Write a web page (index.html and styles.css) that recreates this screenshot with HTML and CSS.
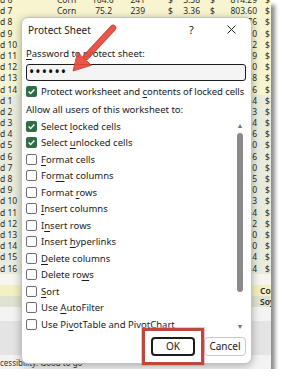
FILE: index.html
```html
<!DOCTYPE html>
<html lang="en">
<head>
    <meta charset="UTF-8">
    <title>Protect Sheet</title>
    <link rel="stylesheet" href="styles.css">
</head>
<body>
    <div class="screen">
        <div class="rows">
            <div class="row"><span>d 6</span><span>Corn</span><span class="num">164.6</span><span class="num">241</span><span class="acct e"><i>$</i>3.38</span><span class="acct f"><i>$</i>814.29</span><span class="acct g"><i>$</i></span></div>
            <div class="row"><span>d 7</span><span>Corn</span><span class="num">75.2</span><span class="num">239</span><span class="acct e"><i>$</i>3.36</span><span class="acct f"><i>$</i>803.60</span><span class="acct g"><i>$</i></span></div>
            <div class="row"><span>d 8</span><span></span><span></span><span></span><span></span><span class="acct f"><i></i>804.76</span><span class="acct g"><i>$</i></span></div>
            <div class="row"><span>d 9</span><span></span><span></span><span></span><span></span><span class="acct f"><i></i>817.40</span><span class="acct g"><i>$</i></span></div>
            <div class="row"><span>d 10</span><span></span><span></span><span></span><span></span><span class="acct f"><i></i>772.92</span><span class="acct g"><i>$</i></span></div>
            <div class="row"><span>d 11</span><span></span><span></span><span></span><span></span><span class="acct f"><i></i>832.39</span><span class="acct g"><i>$</i></span></div>
            <div class="row"><span>d 12</span><span></span><span></span><span></span><span></span><span class="acct f"><i></i>792.20</span><span class="acct g"><i>$</i></span></div>
            <div class="row"><span>d 13</span><span></span><span></span><span></span><span></span><span class="acct f"><i></i>799.68</span><span class="acct g"><i>$</i></span></div>
            <div class="row"><span>d 14</span><span></span><span></span><span></span><span></span><span class="acct f"><i></i>817.96</span><span class="acct g"><i>$</i></span></div>
            <div class="row alt"><span>d 1</span><span></span><span></span><span></span><span></span><span class="acct f"><i></i>600.24</span><span class="acct g"><i>$</i></span></div>
            <div class="row alt"><span>d 2</span><span></span><span></span><span></span><span></span><span class="acct f"><i></i>618.03</span><span class="acct g"><i>$</i></span></div>
            <div class="row alt"><span>d 3</span><span></span><span></span><span></span><span></span><span class="acct f"><i></i>573.04</span><span class="acct g"><i>$</i></span></div>
            <div class="row alt"><span>d 4</span><span></span><span></span><span></span><span></span><span class="acct f"><i></i>626.56</span><span class="acct g"><i>$</i></span></div>
            <div class="row alt"><span>d 5</span><span></span><span></span><span></span><span></span><span class="acct f"><i></i>591.60</span><span class="acct g"><i>$</i></span></div>
            <div class="row alt"><span>d 6</span><span></span><span></span><span></span><span></span><span class="acct f"><i></i>609.46</span><span class="acct g"><i>$</i></span></div>
            <div class="row alt"><span>d 7</span><span></span><span></span><span></span><span></span><span class="acct f"><i></i>564.30</span><span class="acct g"><i>$</i></span></div>
            <div class="row alt"><span>d 8</span><span></span><span></span><span></span><span></span><span class="acct f"><i></i>600.85</span><span class="acct g"><i>$</i></span></div>
            <div class="row alt"><span>d 9</span><span></span><span></span><span></span><span></span><span class="acct f"><i></i>635.70</span><span class="acct g"><i>$</i></span></div>
            <div class="row alt"><span>d 10</span><span></span><span></span><span></span><span></span><span class="acct f"><i></i>582.33</span><span class="acct g"><i>$</i></span></div>
            <div class="row alt"><span>d 11</span><span></span><span></span><span></span><span></span><span class="acct f"><i></i>608.84</span><span class="acct g"><i>$</i></span></div>
            <div class="row alt"><span>d 12</span><span></span><span></span><span></span><span></span><span class="acct f"><i></i>573.62</span><span class="acct g"><i>$</i></span></div>
            <div class="row alt"><span>d 13</span><span></span><span></span><span></span><span></span><span class="acct f"><i></i>617.40</span><span class="acct g"><i>$</i></span></div>
            <div class="row alt"><span>d 14</span><span></span><span></span><span></span><span></span><span class="acct f"><i></i>591.00</span><span class="acct g"><i>$</i></span></div>
            <div class="row alt"><span>d 15</span><span></span><span></span><span></span><span></span><span class="acct f"><i></i>600.24</span><span class="acct g"><i>$</i></span></div>
            <div class="row alt"><span>d 16</span><span></span><span></span><span></span><span></span><span class="acct f"><i></i>581.74</span><span class="acct g"><i>$</i></span></div>
            <div class="row blank"></div>
            <div class="row sum"><span></span><span></span><span></span><span></span><span></span><span></span><b>Corn</b></div>
            <div class="row sum2"><span></span><span></span><span></span><span></span><span></span><span></span><b>Soy</b></div>
        </div>
        <div class="empty"></div>
        <div class="tabs"></div>
        <div class="status">Accessibility: Good to go</div>

        <div class="dialog">
            <div class="title-bar">
                <span class="title">Protect Sheet</span>
                <span class="help">?</span>
                <svg class="close" width="9" height="9" viewBox="0 0 9 9"><path d="M0.5 0.5L8.5 8.5M8.5 0.5L0.5 8.5" stroke="#222" stroke-width="1"/></svg>
            </div>
            <div class="body">
                <div class="line"><u>P</u>assword to protect sheet:</div>
                <div class="password">••••••</div>
                <div class="opt top"><span class="box on"><svg width="11" height="11" viewBox="0 0 11 11"><path d="M2.6 5.6L4.6 7.5L8.4 3.5" fill="none" stroke="#fff" stroke-width="1.4"/></svg></span><span class="tight">Protect worksheet and <u>c</u>ontents of locked cells</span></div>
                <div class="line allow">Allow all users of this worksheet to:</div>
                <div class="list">
                    <div class="items">
                        <div class="opt"><span class="box on"><svg width="11" height="11" viewBox="0 0 11 11"><path d="M2.6 5.6L4.6 7.5L8.4 3.5" fill="none" stroke="#fff" stroke-width="1.4"/></svg></span><span>Select <u>l</u>ocked cells</span></div>
                        <div class="opt"><span class="box on"><svg width="11" height="11" viewBox="0 0 11 11"><path d="M2.6 5.6L4.6 7.5L8.4 3.5" fill="none" stroke="#fff" stroke-width="1.4"/></svg></span><span>Select <u>u</u>nlocked cells</span></div>
                        <div class="opt"><span class="box"></span><span><u>F</u>ormat cells</span></div>
                        <div class="opt"><span class="box"></span><span>For<u>m</u>at columns</span></div>
                        <div class="opt"><span class="box"></span><span>Format <u>r</u>ows</span></div>
                        <div class="opt"><span class="box"></span><span><u>I</u>nsert columns</span></div>
                        <div class="opt"><span class="box"></span><span>I<u>n</u>sert rows</span></div>
                        <div class="opt"><span class="box"></span><span>Insert <u>h</u>yperlinks</span></div>
                        <div class="opt"><span class="box"></span><span><u>D</u>elete columns</span></div>
                        <div class="opt"><span class="box"></span><span>Delete ro<u>w</u>s</span></div>
                        <div class="opt"><span class="box"></span><span><u>S</u>ort</span></div>
                        <div class="opt"><span class="box"></span><span>Use <u>A</u>utoFilter</span></div>
                        <div class="opt"><span class="box"></span><span>Use Pi<u>v</u>otTable and PivotChart</span></div>
                    </div>
                    <div class="scrollbar">
                        <span class="arrow">▲</span>
                        <span class="thumb"></span>
                        <span class="arrow">▼</span>
                    </div>
                </div>
                <div class="buttons">
                    <span class="mark"><button class="ok">OK</button></span>
                    <button>Cancel</button>
                </div>
            </div>
        </div>

        <svg class="pointer" width="282" height="100" viewBox="0 0 282 100">
            <line x1="113" y1="28" x2="86" y2="57" stroke="#c24533" stroke-width="6.5" stroke-linecap="round"/>
            <line x1="113" y1="28" x2="86" y2="57" stroke="#e8473c" stroke-width="4.5" stroke-linecap="round"/>
            <polygon points="73,71 77.6,52.4 91.4,65.2" fill="#e8473c" stroke="#c24533" stroke-width="1" stroke-linejoin="round"/>
        </svg>
    </div>
</body>
</html>
```

FILE: styles.css
```css
* {
    box-sizing: border-box;
}
body {
    margin: 0;
    background: #fff;
    font-family: "Noto Sans", "Open Sans", sans-serif;
    color: #1b1b1b;
}
.screen {
    position: relative;
    width: 271px;
    height: 369px;
    overflow: hidden;
    background: #f2f2f2;
    box-shadow: 4px 5px 4px rgba(0, 0, 0, 0.45);
}

/* spreadsheet behind the dialog */
.rows {
    margin-top: -6px;
}
.row {
    display: grid;
    grid-template-columns: 52px 40px 23px 50px 41px 52px 20px;
    height: 11.2px;
    line-height: 11.2px;
    font-size: 8.5px;
    color: #2a2a2a;
    background: #f7f4cf;
    white-space: nowrap;
}
.row span:nth-child(2) {
    padding-left: 5px;
}
.row.alt {
    background: #e9ecdc;
}
.row.blank {
    background: #f6f6ef;
}
.row.sum {
    background: #f3f1c2;
}
.row.sum2 {
    background: #dfe3d1;
}
.row b {
    padding-left: 2px;
    font-weight: 600;
}
.num {
    text-align: right;
}
.row .num:nth-child(3) {
    padding-right: 3px;
}
.row .num:nth-child(4) {
    padding-right: 20px;
}
.acct {
    display: flex;
    justify-content: space-between;
}
.acct i {
    font-style: normal;
}
.acct.e {
    padding: 0 6px 0 3px;
}
.acct.f {
    padding: 0 1px 0 4px;
}
.acct.g {
    padding-left: 7px;
}
.empty {
    height: 14px;
    background: #f3f3f3;
}
.tabs {
    height: 34px;
    background: #e4e4e4;
}
.status {
    height: 13px;
    text-indent: -9px;
    font-size: 8px;
    line-height: 15px;
    color: #333;
    background: #f3f3f3;
}

/* dialog window */
.dialog {
    position: absolute;
    left: 21px;
    top: 17px;
    width: 231px;
    height: 347px;
    background: #fff;
    border: 1px solid #c3c3c3;
    border-radius: 7px;
    box-shadow: 0 2px 8px rgba(0, 0, 0, 0.3);
    font-size: 9.5px;
}
.title-bar {
    display: flex;
    align-items: center;
    height: 23px;
    padding-left: 6px;
}
.title {
    flex: 1;
    font-size: 10px;
}
.help {
    width: 38px;
    font-size: 11px;
}
.close {
    margin-right: 15px;
}
.body {
    padding: 0 5px 0 4px;
}
u {
    text-decoration-thickness: 1px;
    text-underline-offset: 1.5px;
}
.line {
    height: 14px;
    line-height: 14px;
    margin-top: 6px;
    white-space: nowrap;
}
.password {
    height: 17px;
    margin-top: 3px;
    padding-left: 2px;
    border: 1.5px solid #1e1e1e;
    border-radius: 3px;
    background: #f4f4f4;
    font-size: 14px;
    line-height: 13px;
    letter-spacing: 1.1px;
    color: #111;
}
.opt {
    display: flex;
    align-items: center;
    gap: 4px;
    height: 16.5px;
    white-space: nowrap;
}
.opt.top {
    height: 14px;
    margin-top: 3px;
}
.tight {
    letter-spacing: -0.08px;
}
.line.allow {
    margin-top: 5px;
}
.box {
    width: 11px;
    height: 11px;
    flex: none;
    border: 1px solid #6e6e6e;
    border-radius: 2px;
    background: #fff;
}
.box.on {
    border: none;
    background: #2e6d46;
}
.box svg {
    display: block;
}
.list {
    display: grid;
    grid-template-columns: 1fr 12px;
    margin-top: 1px;
}
.scrollbar {
    display: flex;
    flex-direction: column;
    align-items: center;
    padding: 4px 0 2px;
}
.arrow {
    font-size: 7px;
    line-height: 8px;
    color: #707070;
}
.thumb {
    width: 6px;
    height: 159px;
    margin: 3px 0 auto;
    border-radius: 3px;
    background: #8a8a8a;
}
.buttons {
    display: flex;
    justify-content: flex-end;
    align-items: flex-start;
    gap: 9px;
    margin-top: 4px;
}
button {
    width: 42px;
    height: 19px;
    padding: 0;
    font-family: inherit;
    font-size: 10px;
    color: #1b1b1b;
    background: #fdfdfd;
    border: 1px solid #c9c9c9;
    border-radius: 4px;
}
button.ok {
    display: block;
    width: 44px;
    background: #fff;
    border: 2px solid #1c1c1c;
}
/* red callout box round the OK button */
.mark {
    position: relative;
    z-index: 1;
    margin: -9px;
    padding: 6px;
    border: 3px solid #bb4a3b;
    box-shadow: 0 0 0 1px rgba(236, 130, 160, 0.5);
}

/* callout arrow over the password box */
.pointer {
    position: absolute;
    left: 0;
    top: 0;
    opacity: 0.92;
}
```
